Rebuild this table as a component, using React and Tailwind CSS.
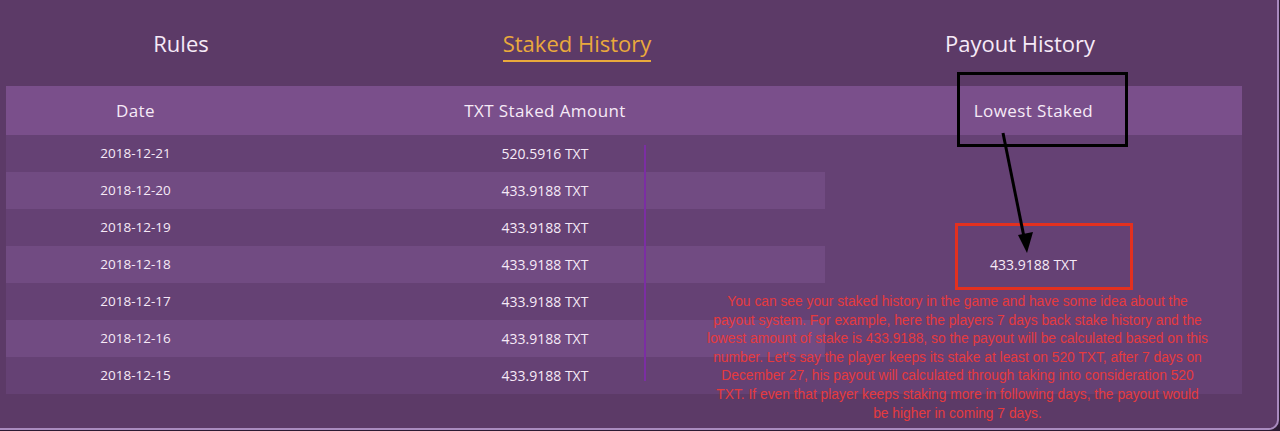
import React from "react";

const rows = [
  { date: "2018-12-21", amount: "520.5916 TXT" },
  { date: "2018-12-20", amount: "433.9188 TXT" },
  { date: "2018-12-19", amount: "433.9188 TXT" },
  { date: "2018-12-18", amount: "433.9188 TXT" },
  { date: "2018-12-17", amount: "433.9188 TXT" },
  { date: "2018-12-16", amount: "433.9188 TXT" },
  { date: "2018-12-15", amount: "433.9188 TXT" },
];

const note = [
  "You can see your staked history in the game and have some idea about the",
  "payout system. For example, here the players 7 days back stake history and the",
  "lowest amount of stake is 433.9188, so the payout will be calculated based on this",
  "number. Let's say the player keeps its stake at least on 520 TXT, after 7 days on",
  "December 27, his payout will calculated through taking into consideration 520",
  "TXT. If even that player keeps staking more in following days, the payout would",
  "be higher in coming 7 days.",
];

const App = () => {
  return (
    <div className="w-[1280px] h-[431px] bg-[#2c1b33] font-['Open_Sans',sans-serif] text-[#f6eaf7]">
      <div className="relative w-[1279px] h-[430px] bg-[#5c3a67] border-r-2 border-b-2 border-[#a98bbf] rounded-br-[10px] overflow-hidden">
        {/* Tabs */}
        <div className="flex h-[86px]">
          <div className="w-[362px] flex justify-center pt-[28px]">
            <span className="text-[22px] leading-[30px]">Rules</span>
          </div>
          <div className="w-[430px] flex justify-center pt-[28px]">
            <span className="text-[22px] leading-[30px] text-[#eaa93c] border-b-2 border-[#eaa93c] h-[34px]">
              Staked History
            </span>
          </div>
          <div className="w-[456px] flex justify-center pt-[28px]">
            <span className="text-[22px] leading-[30px]">Payout History</span>
          </div>
        </div>

        {/* Table header */}
        <div className="ml-[6px] w-[1236px] h-[49px] bg-[#7a4f8b] grid grid-cols-[259px_560px_1fr] items-center text-[17px] tracking-[0.4px] font-medium">
          <div className="text-center">Date</div>
          <div className="text-center">TXT Staked Amount</div>
          <div className="text-center">Lowest Staked</div>
        </div>

        {/* Table body */}
        <div className="ml-[6px] w-[1236px] flex text-[14px]">
          <div className="w-[819px]">
            {rows.map((row, index) => (
              <div
                key={index}
                className={
                  "h-[37px] grid grid-cols-[259px_560px] items-center " +
                  (index % 2 === 0 ? "bg-[#654174]" : "bg-[#714b82]")
                }
              >
                <div className="text-center text-[13.5px]">{row.date}</div>
                <div className="text-center">{row.amount}</div>
              </div>
            ))}
          </div>
          <div className="flex-1 bg-[#654174] flex flex-col">
            <div className="h-[111px]" />
            <div className="h-[37px] flex items-center justify-center">433.9188 TXT</div>
          </div>
        </div>

        {/* divider */}
        <div className="absolute left-[644px] top-[145px] w-[2px] h-[236px] bg-[#7b2ea3]" />

        {/* annotations */}
        <div className="absolute left-[957px] top-[72px] w-[171px] h-[75px] border-[3px] border-black" />
        <div className="absolute left-[955px] top-[223px] w-[178px] h-[67px] border-[3px] border-[#e3301f]" />
        <svg className="absolute left-[990px] top-[125px]" width="50" height="135" viewBox="0 0 50 135">
          <line x1="13" y1="8" x2="34" y2="112" stroke="black" strokeWidth="3" />
          <polygon points="37,128 28,110 43,107" fill="black" />
        </svg>
        <div className="absolute left-[700px] top-[293px] w-[515px] text-center text-[13.8px] leading-[18.6px] text-[#e63a3e] font-['Liberation_Sans',Arial,sans-serif]">
          {note.map((line, i) => (
            <div key={i} className="whitespace-nowrap">{line}</div>
          ))}
        </div>
      </div>
    </div>
  );
};

export default App;
